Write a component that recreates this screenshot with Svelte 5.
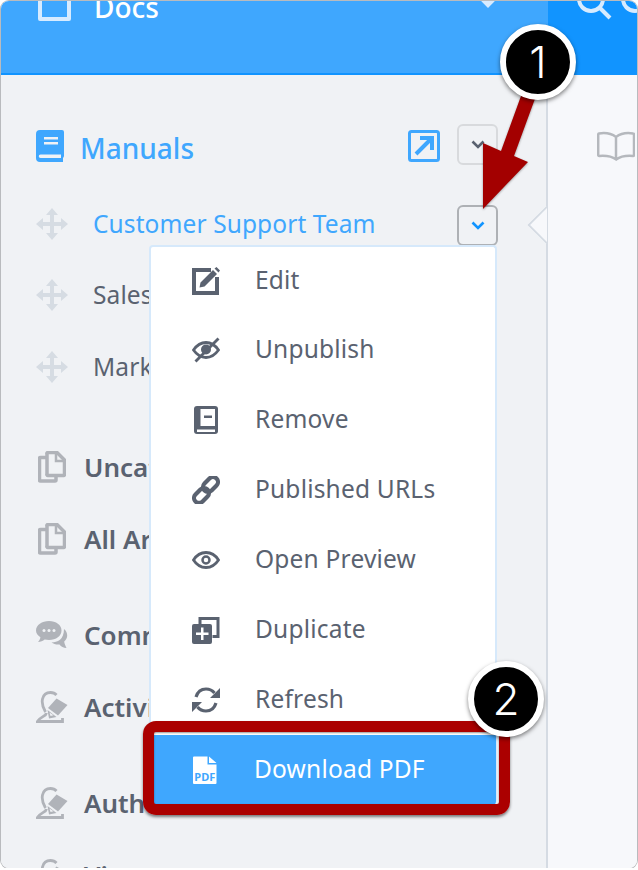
<script>
  const menu_items = [
    { label: "Edit", icon: "edit" },
    { label: "Unpublish", icon: "unpublish" },
    { label: "Remove", icon: "remove" },
    { label: "Published URLs", icon: "link" },
    { label: "Open Preview", icon: "eye" },
    { label: "Duplicate", icon: "duplicate" },
    { label: "Refresh", icon: "refresh" },
    { label: "Download PDF", icon: "pdf", active: true }
  ]

  const manuals = [
    { label: "Customer Support Team", active: true },
    { label: "Sales Team" },
    { label: "Marketing" }
  ]

  const sections = [
    [{ label: "Uncategorized", icon: "pages" }, { label: "All Articles", icon: "pages" }],
    [{ label: "Comments", icon: "comments" }, { label: "Activity", icon: "person" }],
    [{ label: "Authors", icon: "person" }, { label: "Views", icon: "person" }]
  ]
</script>

{#snippet chevron()}
  <svg class="chevron" viewBox="0 0 14 9" width="14" height="9">
    <path d="M1.500 1.500 7 7l5.500-5.500" fill="none" stroke="currentColor" stroke-width="2.600" />
  </svg>
{/snippet}

{#snippet move_icon()}
  <svg viewBox="0 0 32 32" width="32" height="32" fill="#d6dce3">
    <path d="M16 0l6 7h-4v7h7v-4l7 6-7 6v-4h-7v7h4l-6 7-6-7h4v-7H7v4l-7-6 7-6v4h7V7h-4z" />
  </svg>
{/snippet}

{#snippet section_icon(name)}
  {#if name === "pages"}
    <svg viewBox="0 0 28 32" width="28" height="32" fill="none" stroke="#b0b3b9" stroke-width="3.500">
      <path d="M9 6.500H2.500a1 1 0 0 0-1 1V29a1 1 0 0 0 1 1H17a1 1 0 0 0 1-1v-4" stroke-linejoin="round" />
      <path d="M9 3a1 1 0 0 1 1-1.500h9L26.500 9v14a1 1 0 0 1-1 1.500H10A1 1 0 0 1 9 23z" stroke-linejoin="round" />
      <path d="M18 2v8h8" stroke-width="2.500" />
    </svg>
  {:else if name === "comments"}
    <svg viewBox="0 0 32 28" width="32" height="28">
      <path d="M13 0c7 0 12.500 4 12.500 9.500S20 19 13 19c-1.500 0-3-.2-4.300-.5C7 20 4.500 21 2 21c1.200-1.300 2.300-3 2.400-4.800C1.700 14.500 0 12.200 0 9.500 0 4 6 0 13 0z" fill="#b0b3b9" />
      <circle cx="8" cy="9.500" r="1.500" fill="#f0f2f5" />
      <circle cx="13" cy="9.500" r="1.500" fill="#f0f2f5" />
      <circle cx="18" cy="9.500" r="1.500" fill="#f0f2f5" />
      <path d="M28 8c2.500 1.800 3.200 4.500 3.200 6.500 0 2.300-1.200 4.500-3 6 .1 2 1.200 4 2.300 6.500-3 0-5.500-1.500-7-3.500-3 .3-6-.5-8-2 6 0 12.500-3 12.500-13.500z" fill="#b0b3b9" />
    </svg>
  {:else}
    <svg viewBox="0 0 32 32" width="32" height="32">
      <path d="M9.500 21C7 17 5.500 13 6.500 8 7.500 3.500 11 1.500 14.500 1.500c2.500 0 4.500.8 6 2.500M10.500 22C10 25.500 4 25.500 1.500 30.500h25V27" fill="none" stroke="#b0b3b9" stroke-width="2.800" />
      <path d="M20.500 7.500 31.500 14 22 24.500 12 17z" fill="#b0b3b9" />
      <path d="M11.500 19 13 27.500l7.500-1.500z" fill="#b0b3b9" />
      <path d="M13.500 21.500l1 3.500 3-.8z" fill="#f0f2f5" />
    </svg>
  {/if}
{/snippet}

{#snippet menu_icon(name)}
  {#if name === "edit"}
    <svg viewBox="0 0 28 28" width="28" height="28">
      <path d="M19 3H2v23h23V10" fill="none" stroke="currentColor" stroke-width="4" />
      <path d="M7.500 20.500l1-5L21 3l4 4-12.500 12.500zM22.500 1.500l2-1.500L28 3.500 26.500 5.500z" fill="currentColor" />
    </svg>
  {:else if name === "unpublish"}
    <svg viewBox="0 0 28 28" width="28" height="28">
      <path d="M1.500 14C5 9 9 6.500 14 6.500S23 9 26.500 14C23 19 19 21.500 14 21.500S5 19 1.500 14z" fill="none" stroke="currentColor" stroke-width="2.800" />
      <circle cx="14" cy="13.500" r="5" fill="currentColor" />
      <path d="M3.500 25.500 26.500 2.500" stroke="currentColor" stroke-width="2.800" />
    </svg>
  {:else if name === "remove"}
    <svg viewBox="0 0 28 28" width="28" height="28">
      <rect x="2" y="0" width="24" height="28" rx="3" fill="currentColor" />
      <path d="M8.500 3H23v17H8.500zM5 23.500h18V26H5z" fill="#fff" />
      <path d="M12 9.500h8V12h-8z" fill="currentColor" />
    </svg>
  {:else if name === "link"}
    <svg viewBox="0 0 28 28" width="28" height="28" fill="none" stroke="currentColor" stroke-width="4.200">
      <rect x="10" y="3.500" width="17" height="10" rx="5" transform="rotate(-45 18.500 8.500)" />
      <rect x="1" y="14.500" width="17" height="10" rx="5" transform="rotate(-45 9.500 19.500)" />
    </svg>
  {:else if name === "eye"}
    <svg viewBox="0 0 28 28" width="28" height="28">
      <path d="M1.500 14C5 8.500 9 6.500 14 6.500S23 8.500 26.500 14C23 19.500 19 21.500 14 21.500S5 19.500 1.500 14z" fill="none" stroke="currentColor" stroke-width="2.800" />
      <circle cx="14" cy="14" r="3.500" fill="none" stroke="currentColor" stroke-width="2.500" />
    </svg>
  {:else if name === "duplicate"}
    <svg viewBox="0 0 28 28" width="28" height="28">
      <path d="M8 8V2.500h18v18h-5.500" fill="none" stroke="currentColor" stroke-width="3" />
      <rect x="0" y="8" width="20" height="20" rx="2" fill="currentColor" />
      <path d="M9 11.500h2.500V16.500h5V19h-5v5H9v-5H4v-2.500h5z" fill="#fff" />
    </svg>
  {:else if name === "refresh"}
    <svg viewBox="0 0 28 28" width="28" height="28">
      <path d="M4 11C5.500 6 9.500 3 14 3c3.500 0 6.500 1.500 8.500 4M24 17c-1.500 5-5.500 8-10 8-3.500 0-6.500-1.500-8.500-4" fill="none" stroke="currentColor" stroke-width="3.200" />
      <path d="M28 2v10H18zM0 26V16h10z" fill="currentColor" />
    </svg>
  {:else if name === "pdf"}
    <svg viewBox="0 0 26 28" width="26" height="28">
      <path d="M1 1.500a1 1 0 0 1 1-1h13.500v8h9V27a1 1 0 0 1-1 1H2a1 1 0 0 1-1-1zM17 .5l7.500 6.500H17z" fill="#fff" />
      <text x="12.800" y="25" class="pdf-label">PDF</text>
    </svg>
  {/if}
{/snippet}

<div class="window">
  <aside class="sidebar">
    <header class="sidebar-header">
      <span class="docs-box"></span>
      <span class="docs-label">Docs</span>
      <span class="diamond"></span>
    </header>

    <nav class="nav">
      <div class="manuals-title">
        <svg viewBox="0 0 28 32" width="28" height="32">
          <path d="M4 0h22a2 2 0 0 1 2 2v24a3 3 0 0 1-1 2v4H4a4 4 0 0 1-4-4V4a4 4 0 0 1 4-4z" fill="#3fa7fe" />
          <path d="M8 7h14v2.500H8zM8 12h14v2.500H8zM4.500 24.500H25v3.500H4.500a1.700 1.700 0 0 1 0-3.500z" fill="#f0f2f5" />
        </svg>
        <span class="manuals-label">Manuals</span>
        <svg class="external" viewBox="0 0 32 32" width="32" height="32">
          <rect x="1.500" y="1.500" width="29" height="29" rx="2" fill="none" stroke="#3fa7fe" stroke-width="3" />
          <path d="M8 24 23 9M12 8h12v12" fill="none" stroke="#3fa7fe" stroke-width="4" />
        </svg>
        <button class="toggle top">{@render chevron()}</button>
      </div>

      {#each manuals as manual}
        <div class="manual" class:active={manual.active}>
          {@render move_icon()}
          <span class="manual-label">{manual.label}</span>
          {#if manual.active}
            <button class="toggle open">{@render chevron()}</button>
          {/if}
        </div>
      {/each}

      {#each sections as section}
        <div class="section">
          {#each section as item}
            <div class="section-row">
              <span class="section-icon">{@render section_icon(item.icon)}</span>
              <span>{item.label}</span>
            </div>
          {/each}
        </div>
      {/each}
    </nav>
  </aside>

  <main class="main">
    <header class="main-header">
      <svg viewBox="0 0 36 36" width="36" height="36" fill="none" stroke="#d7ebff" stroke-width="4">
        <circle cx="15" cy="15" r="12" />
        <path d="M24 24 34 34" />
      </svg>
      <svg viewBox="0 0 36 36" width="36" height="36" fill="none" stroke="#d7ebff" stroke-width="4">
        <circle cx="15" cy="15" r="12" />
        <path d="M24 24 34 34" />
      </svg>
    </header>
    <div class="main-body">
      <svg viewBox="0 0 38 30" width="38" height="30" fill="none" stroke="#b5b8bd" stroke-width="2.500">
        <path d="M19 6C15 3 8 1.500 2 2.500a1 1 0 0 0-.8 1V24a1 1 0 0 0 1 1c6-.5 12 0 17 3.500C24 25 30 24.500 36 25a1 1 0 0 0 1-1V3.500a1 1 0 0 0-1-1C30 1.500 23 3 19 6zM19 6v22" />
      </svg>
    </div>
  </main>

  <span class="notch"></span>

  <div class="menu">
    {#each menu_items as item}
      <div class="menu-item" class:active={item.active}>
        <span class="menu-icon">{@render menu_icon(item.icon)}</span>
        <span class="menu-label">{item.label}</span>
      </div>
    {/each}
  </div>

  <span class="highlight"></span>

  <svg class="arrow" viewBox="0 0 60 120" width="60" height="120">
    <path d="M53 0 38 0 18 55 0 47 0 113 45 66 31 60z" fill="#a30000" />
  </svg>

  <span class="badge one">1</span>
  <span class="badge two">2</span>
</div>

<style>
  :global(body) {
    background: #fff;
  }

  .window {
    position: relative;
    display: flex;
    width: 636px;
    height: 867px;
    margin: 1px 0 0 1px;
    overflow: hidden;
    border-radius: 8px;
    box-shadow: 0 0 0 1px #b9bbbe;
    font-family: "Noto Sans", sans-serif;
    color: #5a6270;
  }

  .sidebar {
    display: flex;
    flex-direction: column;
    width: 547px;
    flex: none;
    box-sizing: border-box;
    background: #f0f2f5;
    border-right: 2px solid #d5dbe3;
  }

  .sidebar-header {
    display: flex;
    align-items: flex-end;
    flex: none;
    box-sizing: border-box;
    height: 74px;
    margin-right: -2px;
    padding: 0 0 53px 37px;
    background: #3fa7fe;
    border-bottom: 2px solid #1194ff;
  }

  .docs-box {
    flex: none;
    box-sizing: border-box;
    width: 33px;
    height: 33px;
    margin-bottom: -1px;
    border: 4px solid #d7ebff;
    border-radius: 2px;
  }

  .docs-label {
    margin-left: 23px;
    font-size: 28px;
    line-height: 26px;
    font-weight: 500;
    color: #fff;
  }

  .diamond {
    flex: none;
    width: 14px;
    height: 14px;
    margin: 0 0 15px 322px;
    background: #d7ebff;
    transform: rotate(45deg);
  }

  .nav {
    display: flex;
    flex-direction: column;
    padding: 46px 48px 0 35px;
  }

  .manuals-title {
    display: flex;
    align-items: center;
    height: 50px;
  }

  .manuals-label {
    flex: 1;
    margin: 4px 0 0 16px;
    font-size: 28px;
    font-weight: 500;
    color: #3fa7fe;
  }

  .external {
    margin-right: 17px;
  }

  .toggle {
    display: flex;
    align-items: center;
    justify-content: center;
    width: 41px;
    height: 41px;
    padding: 0;
    background: none;
    border: 2px solid #d8dadd;
    border-radius: 6px;
    color: #5a6270;
  }

  .toggle.top {
    margin-bottom: 3px;
  }

  .toggle.open {
    margin-top: 2px;
    border-color: #aeb1b5;
    color: #1194ff;
  }

  .manual {
    display: flex;
    align-items: center;
    height: 72px;
    font-size: 24.500px;
  }

  .manuals-title + .manual {
    margin-top: 17px;
    margin-bottom: -1px;
  }

  .manual.active {
    color: #3fa7fe;
  }

  .manual-label {
    flex: 1;
    margin-left: 25px;
    padding-bottom: 1px;
    letter-spacing: 0.1px;
    white-space: nowrap;
  }

  .section {
    display: flex;
    flex-direction: column;
    margin-top: 24px;
  }

  .manual + .section {
    margin-top: 28px;
  }

  .section-row {
    display: flex;
    align-items: center;
    flex: none;
    height: 72px;
    font-size: 26px;
    font-weight: 600;
  }

  .section-icon {
    display: flex;
    justify-content: center;
    width: 32px;
    margin-right: 16px;
  }

  .main {
    display: flex;
    flex-direction: column;
    flex: 1;
    background: #f7f8fb;
  }

  .main-header {
    display: flex;
    align-items: flex-end;
    gap: 8px;
    flex: none;
    box-sizing: border-box;
    height: 74px;
    padding: 0 0 55px 28px;
    background: #1194ff;
  }

  .main-body {
    padding: 56px 0 0 49px;
  }

  .notch {
    position: absolute;
    left: 532px;
    top: 210px;
    width: 28px;
    height: 28px;
    box-sizing: border-box;
    background: #f7f8fb;
    border-left: 2px solid #d5dbe3;
    border-bottom: 2px solid #d5dbe3;
    transform: rotate(45deg);
    clip-path: polygon(0 0, 100% 100%, 0 100%);
  }

  .menu {
    position: absolute;
    left: 148px;
    top: 244px;
    width: 348px;
    box-sizing: border-box;
    background: #fff;
    border: 2px solid #d6e9fb;
    border-bottom: none;
    border-radius: 4px;
    font-size: 24.500px;
  }

  .menu-item {
    display: flex;
    align-items: center;
    height: 70px;
    padding-left: 41px;
  }

  .menu-item:first-child {
    height: 68px;
  }

  .menu-item.active {
    margin: 0 -1px;
    background: #3fa7fe;
    color: #fff;
    border-radius: 0 0 4px 4px;
  }

  .menu-icon {
    display: flex;
    justify-content: center;
    width: 28px;
    margin-right: 35px;
  }

  .menu-label {
    padding-bottom: 3px;
    letter-spacing: 0.2px;
  }

  .pdf-label {
    font-size: 11px;
    font-weight: 700;
    text-anchor: middle;
    fill: #3fa7fe;
  }

  .highlight {
    position: absolute;
    left: 142px;
    top: 720px;
    width: 367px;
    height: 94px;
    box-sizing: border-box;
    border: 11px solid #ab0000;
    border-radius: 13px;
    box-shadow: 0 2px 3px rgba(0, 0, 0, 0.5), inset 0 1px 2px rgba(0, 0, 0, 0.4);
  }

  .arrow {
    position: absolute;
    left: 482px;
    top: 95px;
    filter: drop-shadow(0 1px 1px rgba(0, 0, 0, 0.35));
  }

  .badge {
    position: absolute;
    display: flex;
    align-items: center;
    justify-content: center;
    box-sizing: border-box;
    width: 76px;
    height: 76px;
    background: #000;
    border: 6px solid #fff;
    border-radius: 50%;
    box-shadow: 0 2px 4px rgba(0, 0, 0, 0.5);
    color: #fff;
    font-family: "Inter", sans-serif;
    font-size: 44px;
    font-weight: 300;
  }

  .badge.one {
    left: 499px;
    top: 23px;
  }

  .badge.two {
    left: 467px;
    top: 660px;
  }
</style>
